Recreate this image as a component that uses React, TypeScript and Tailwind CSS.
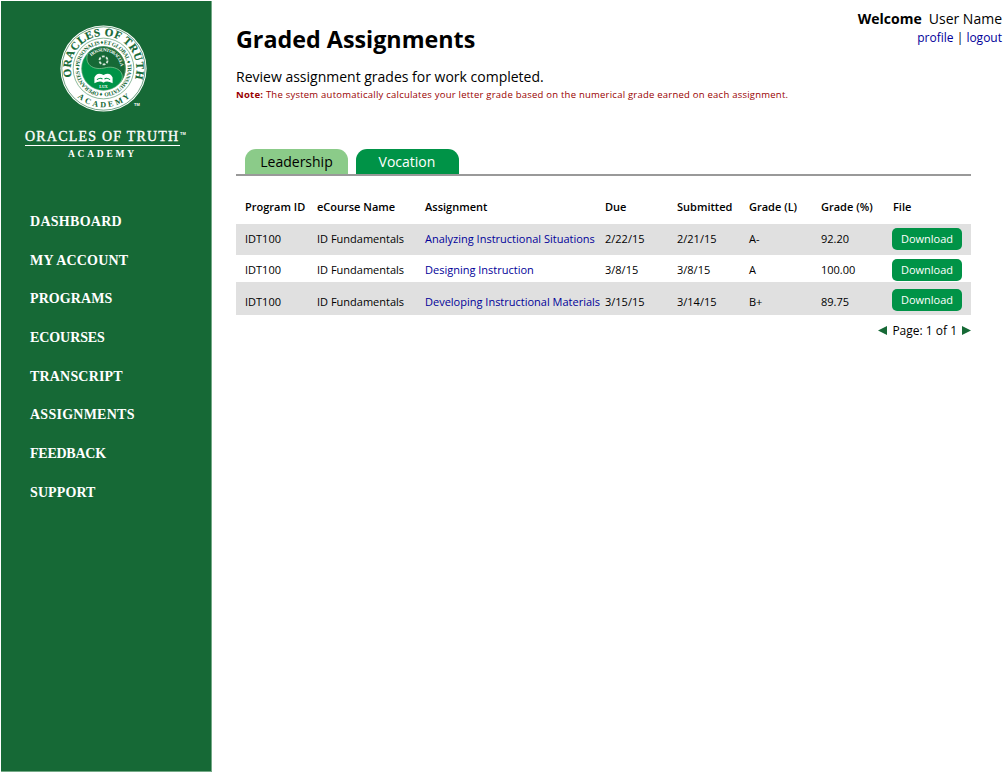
const nav = [
  { label: 'DASHBOARD', cls: 'tracking-[0.28px]' },
  { label: 'MY ACCOUNT', cls: 'tracking-[0.2px]' },
  { label: 'PROGRAMS', cls: 'tracking-[0.1px]' },
  { label: 'ECOURSES', cls: 'tracking-[-0.08px]' },
  { label: 'TRANSCRIPT', cls: 'tracking-[0.18px]' },
  { label: 'ASSIGNMENTS', cls: 'tracking-[0.25px]' },
  { label: 'FEEDBACK', cls: 'tracking-[-0.25px]' },
  { label: 'SUPPORT', cls: 'tracking-[0.1px]' },
];

const columns = ['Program ID', 'eCourse Name', 'Assignment', 'Due', 'Submitted', 'Grade (L)', 'Grade (%)', 'File'];

const rows = [
  { title: 'Analyzing Instructional Situations', due: '2/22/15', submitted: '2/21/15', letter: 'A-', grade: '92.20', row: 'h-[31px] bg-[#e0e0e0] pt-[7px]', btn: '-mt-[3px]' },
  { title: 'Designing Instruction', due: '3/8/15', submitted: '3/8/15', letter: 'A', grade: '100.00', row: 'h-[27px] pt-[7px]', btn: '-mt-[3px]' },
  { title: 'Developing Instructional Materials', due: '3/15/15', submitted: '3/14/15', letter: 'B+', grade: '89.75', row: 'h-[33px] bg-[#e0e0e0] pt-[12px]', btn: '-mt-[5px]' },
];

const grid = 'grid grid-cols-[72px_108px_180px_72px_72px_72px_71px_79px] items-start pl-[9px] text-[11px] leading-[16px] whitespace-nowrap';

function Seal() {
  return (
    <svg width="87" height="87" viewBox="0 0 86 86" fontFamily="'Liberation Serif', serif" className="block">
      <defs>
        <path id="outerTop" d="M 11.8 52.3 A 32.5 32.5 0 1 1 74.2 52.3" />
        <path id="outerBottom" d="M 4.6 43 A 38.4 38.4 0 0 0 81.4 43" />
        <path id="middle" d="M 43 67 A 24 24 0 0 1 43 19 A 24 24 0 0 1 43 67" />
        <path id="inner" d="M 31 31 A 17 17 0 0 1 60 43.500" />
      </defs>
      <circle cx="43" cy="43" r="42.6" fill="#fff" />
      <circle cx="43" cy="43" r="41.2" fill="none" stroke="#166936" strokeWidth=".6" />
      <circle cx="43" cy="43" r="30" fill="none" stroke="#5c9c72" strokeWidth=".7" />
      <circle cx="43" cy="43" r="21.8" fill="#009347" />
      <path d="M28 27 A21.8 21.8 0 0 1 64.8 43 A21.8 21.8 0 0 1 59 57.700 C66 49 58 40 46 42 C32 46 23 38 28 27Z" fill="#166936" />
      <path d="M28 27 C23 38 32 46 46 42 C58 40 66 49 59 57.700" fill="none" stroke="#8bc99a" strokeWidth=".7" />
      <circle cx="43" cy="43" r="21.6" fill="none" stroke="#86b795" strokeWidth=".5" />
      <g fill="#166936" fontWeight="bold">
        <text fontSize="11" stroke="#166936" strokeWidth=".2"><textPath href="#outerTop" startOffset="1" textLength="120" lengthAdjust="spacing">ORACLES OF TRUTH</textPath></text>
        <text fontSize="8"><textPath href="#outerBottom" startOffset="32" textLength="57" lengthAdjust="spacing">ACADEMY</textPath></text>
        <text fontSize="5.6"><textPath href="#middle" startOffset="1" textLength="148" lengthAdjust="spacing">♦ OPERANTES ♦ PERSONALIS ♦ ET GLOBAL ♦ TRANSMUTATIO</textPath></text>
      </g>
      <text fontSize="4.6" fontWeight="bold" fill="#fff"><textPath href="#inner" startOffset="0" textLength="38" lengthAdjust="spacing">HOS SUNT ORACULA</textPath></text>
      <circle cx="43" cy="35" r="4" fill="none" stroke="#d5e9da" strokeWidth="1.8" strokeDasharray="2.800 1.390" />
      <path d="M34 52 Q36.500 46 43 49.500 Q49.500 46 52 52 V57.500 Q46.500 54.500 43 57 Q39.500 54.500 34 57.500Z" fill="#fff" />
      <path d="M36.500 54 Q40 51.500 42 53.500 M44 53.500 Q46 51.500 49.500 54" fill="none" stroke="#009347" strokeWidth="1" />
      <text x="43" y="62" fontSize="4" fontWeight="bold" fill="#fff" textAnchor="middle">LUX</text>
    </svg>
  );
}

export default function App() {
  return (
    <div className="flex h-[772px] w-[1003px] overflow-hidden bg-white font-['Open_Sans',sans-serif] text-black">
      <aside className="mt-px ml-px h-[771px] w-[211px] shrink-0 border-r border-b border-[#73a986] bg-[#166936] text-white">
        <div className="relative mt-[24px] ml-[59px] w-[87px]">
          <Seal />
          <span className="absolute top-[76px] left-[74px] font-['Liberation_Sans',sans-serif] text-[4px] leading-[8px] font-bold">TM</span>
        </div>
        <div className="ml-[24px] w-[162px] font-['Liberation_Serif',serif]">
          <div className="mt-[17px] flex h-[17px] items-start text-[14px] leading-[16px] whitespace-nowrap">
            <span className="h-[17px] w-[155px] border-b border-white tracking-[1.2px] [-webkit-text-stroke:0.35px_white]">ORACLES OF TRUTH</span>
            <span className="mt-[2px] font-['Liberation_Sans',sans-serif] text-[4px] leading-[5px] font-bold">TM</span>
          </div>
          <div className="mt-[2px] ml-[43px] text-[9.500px] leading-[12px] font-bold tracking-[2.750px]">ACADEMY</div>
        </div>
        <nav className="mt-[42px] ml-[29px] font-['Liberation_Serif',serif] text-[14px] font-bold">
          {nav.map((n) => (
            <a key={n.label} className={`flex h-[38.700px] items-center whitespace-nowrap ${n.cls}`}>{n.label}</a>
          ))}
        </nav>
      </aside>
      <main className="ml-[24px] w-[767px] shrink-0">
        <header className="flex h-[149px] justify-between whitespace-nowrap">
          <div className="pt-[23px]">
            <h1 className="text-[23.300px] leading-[32px] font-bold">Graded Assignments</h1>
            <p className="mt-[12px] text-[14px] leading-[20px]">Review assignment grades for work completed.</p>
            <p className="mt-px text-[9.500px] leading-[14px] tracking-[0.230px] text-[#990000]"><b>Note:</b> The system automatically calculates your letter grade based on the numerical grade earned on each assignment.</p>
          </div>
          <div className="pt-[9px] pr-px text-right">
            <div className="text-[14px] leading-[20px]"><b className="mr-[7px]">Welcome</b>User Name</div>
            <div className="text-[12px] leading-[17px]"><a className="text-[#000099]">profile</a> | <a className="text-[#000099]">logout</a></div>
          </div>
        </header>
        <div className="flex h-[27px] w-[735px] gap-[8px] border-b-2 border-[#999] pl-[9px] text-center text-[14px] leading-[25px]">
          <div className="h-[25px] w-[103px] rounded-t-[11px] bg-[#8bcb89]">Leadership</div>
          <div className="h-[25px] w-[103px] rounded-t-[11px] bg-[#009347] pr-px text-white">Vocation</div>
        </div>
        <section className="w-[735px]">
          <div className={`${grid} h-[48px] pt-[23px] font-semibold`}>
            {columns.map((c) => <div key={c} className="last:pl-px">{c}</div>)}
          </div>
          {rows.map((r) => (
            <div key={r.title} className={`${grid} ${r.row}`}>
              <div>IDT100</div>
              <div>ID Fundamentals</div>
              <a className="text-[#000099]">{r.title}</a>
              <div>{r.due}</div>
              <div>{r.submitted}</div>
              <div>{r.letter}</div>
              <div>{r.grade}</div>
              <button className={`h-[22px] w-[70px] rounded-[5px] bg-[#009347] text-[11px] leading-[22px] text-white ${r.btn}`}>Download</button>
            </div>
          ))}
          <div className="mt-[7px] flex items-center justify-end gap-[5px] text-[12px] leading-[18px]">
            <svg width="9" height="9" viewBox="0 0 9 9" className="-mt-[2px]"><path d="M0 4.500 9 0v9z" fill="#166936" /></svg>
            <span>Page: 1 of 1</span>
            <svg width="9" height="9" viewBox="0 0 9 9" className="-mt-[2px]"><path d="M9 4.500 0 0v9z" fill="#166936" /></svg>
          </div>
        </section>
      </main>
    </div>
  );
}
